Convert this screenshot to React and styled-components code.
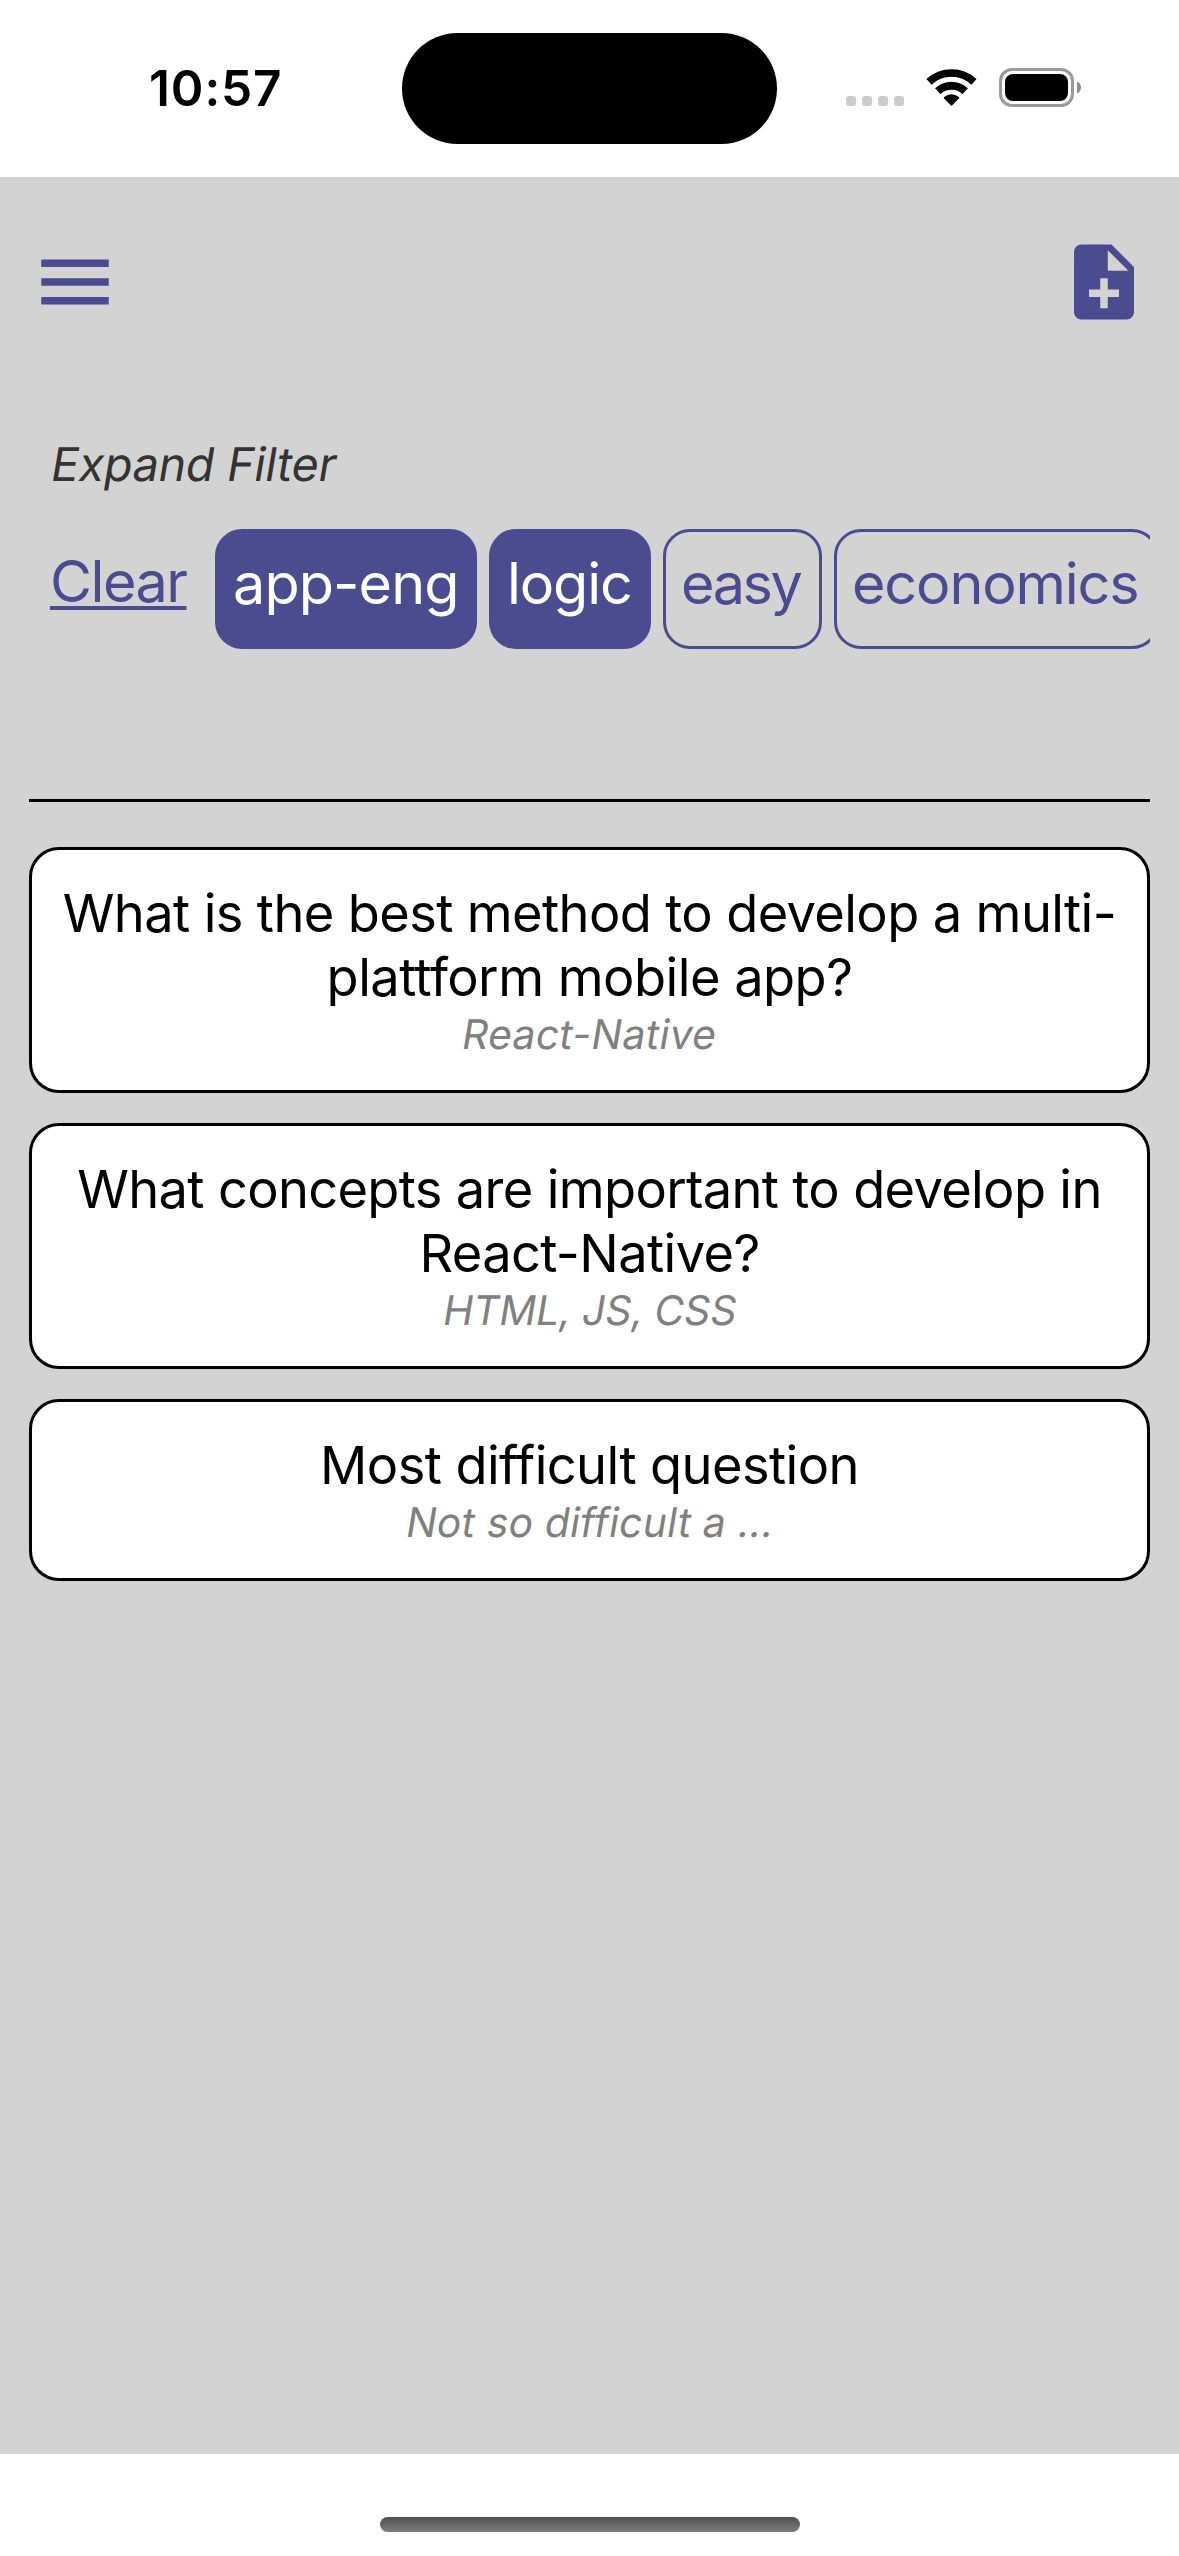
import React from "react";
import styled, { createGlobalStyle } from "styled-components";

const ACCENT = "#4b4b8f";

const GlobalStyle = createGlobalStyle`
  *, *::before, *::after { box-sizing: border-box; }
  body { margin: 0; background: #fff; }
`;

const Screen = styled.div`
  display: flex;
  flex-direction: column;
  width: 1179px;
  height: 2556px;
  overflow: hidden;
  background: #fff;
  font-family: Inter, "Liberation Sans", sans-serif;
  color: #000;
`;

const StatusBar = styled.header`
  display: grid;
  grid-template-columns: 402px 375px 1fr;
  height: 177px;
  flex: none;
`;

const Time = styled.div`
  padding: 58px 0 0 149px;
  font-size: 49.5px;
  font-weight: 600;
  line-height: 60px;
  letter-spacing: 0.9px;
`;

const Island = styled.div`
  height: 111px;
  margin-top: 33px;
  border-radius: 56px;
  background: #000;
`;

const StatusIcons = styled.div`
  display: flex;
  align-items: flex-end;
  gap: 22px;
  padding: 0 0 70px 69px;
`;

const SignalDots = styled.div`
  display: flex;
  gap: 6px;
  margin-bottom: 1px;
`;

const Dot = styled.span`
  width: 10px;
  height: 10px;
  border-radius: 3px;
  background: #ccc;
`;

const WifiIcon = styled.svg`
  display: block;
  width: 51px;
  height: 38px;
`;

const BatteryIcon = styled.svg`
  display: block;
  width: 83px;
  height: 39px;
`;

const Page = styled.main`
  flex: 1;
  background: #d3d3d3;
`;

const AppBar = styled.nav`
  display: flex;
  justify-content: space-between;
  padding: 60px 30px 0;
`;

const IconButton = styled.button`
  display: block;
  width: 90px;
  height: 90px;
  padding: 0;
  border: 0;
  background: none;
  color: ${ACCENT};

  svg {
    display: block;
    width: 100%;
    height: 100%;
    fill: currentColor;
  }
`;

const Filter = styled.section`
  display: flex;
  flex-direction: column;
  margin: 0 29px;
  padding: 109px 0 150px;
  border-bottom: 3px solid #000;
`;

const Oblique = styled.span`
  display: inline-block;
  transform: skewX(-9.5deg);
  transform-origin: 0 80%;
  letter-spacing: ${(p) => p.$tracking || 0}px;
`;

const FilterToggle = styled.div`
  padding-left: 20px;
  margin-bottom: 37px;
  font-size: 46.5px;
  line-height: 56px;
  color: #333;
`;

const TagRow = styled.div`
  display: flex;
  gap: 12px;
  height: 120px;
  padding-left: 21px;
  overflow: hidden;
`;

const ClearLink = styled.a`
  flex: none;
  width: 135px;
  margin: 16px 18px 0 0;
  font-size: 57.5px;
  line-height: 72px;
  letter-spacing: -1.5px;
  color: ${ACCENT};
  text-decoration: underline;
  text-decoration-thickness: 4px;
  text-underline-offset: 4px;
  text-decoration-skip-ink: none;
`;

const Tag = styled.button`
  flex: none;
  width: ${(p) => p.$width}px;
  height: 120px;
  padding: 0 0 12px 15px;
  border: 3px solid ${ACCENT};
  border-radius: 27px;
  background: ${(p) => (p.$active ? ACCENT : "transparent")};
  color: ${(p) => (p.$active ? "#fff" : ACCENT)};
  font-family: inherit;
  font-size: 57.5px;
  line-height: 72px;
  letter-spacing: ${(p) => p.$tracking}px;
  text-align: left;
  white-space: nowrap;
`;

const CardList = styled.section`
  display: flex;
  flex-direction: column;
  gap: 30px;
  padding: 45px 29px 0;
`;

const Card = styled.article`
  padding: 31px 20px 30px;
  border: 3px solid #000;
  border-radius: 30px;
  background: #fff;
  text-align: center;
`;

const Question = styled.h2`
  margin: 0;
  font-size: 52.4px;
  font-weight: 400;
  line-height: 64px;
`;

const Line = styled.span`
  display: block;
  white-space: nowrap;
  letter-spacing: ${(p) => p.$tracking}px;
`;

const Answer = styled.p`
  margin: 0;
  padding-right: 4px;
  font-size: 40.8px;
  line-height: 51px;
  color: #808080;
`;

const HomeArea = styled.footer`
  display: flex;
  justify-content: center;
  height: 102px;
  padding-top: 63px;
  flex: none;
`;

const HomeIndicator = styled.div`
  width: 420px;
  height: 15px;
  border-radius: 8px;
  background: linear-gradient(#505050, #7e7e7e);
`;

const tags = [
  { label: "app-eng", width: 262, tracking: -0.9, active: true },
  { label: "logic", width: 162, tracking: -1.15, active: true },
  { label: "easy", width: 159, tracking: -2.4 },
  { label: "economics", width: 325, tracking: -1.15 },
];

const cards = [
  {
    question: [
      { text: "What is the best method to develop a multi-", tracking: -0.62 },
      { text: "plattform mobile app?", tracking: -0.52 },
    ],
    answer: "React-Native",
    tracking: 0.35,
  },
  {
    question: [
      { text: "What concepts are important to develop in", tracking: -0.66 },
      { text: "React-Native?", tracking: -0.6 },
    ],
    answer: "HTML, JS, CSS",
    tracking: -0.1,
  },
  {
    question: [{ text: "Most difficult question", tracking: -0.58 }],
    answer: "Not so difficult a ...",
    tracking: 0.2,
  },
];

export default function App() {
  return (
    <Screen>
      <GlobalStyle />
      <StatusBar>
        <Time>10:57</Time>
        <Island />
        <StatusIcons>
          <SignalDots>
            <Dot />
            <Dot />
            <Dot />
            <Dot />
          </SignalDots>
          <WifiIcon viewBox="0 0 51 38" fill="none" stroke="#000">
            <path d="M3 12.9A33 33 0 0 1 48 12.9" strokeWidth="7.6" />
            <path d="M11.7 22.2A20.2 20.2 0 0 1 39.3 22.2" strokeWidth="7.8" />
            <path
              d="M25.5 37L17.9 29.2Q17.6 28.6 18.2 28Q21.5 25.3 25.5 25.3Q29.5 25.3 32.8 28Q33.4 28.6 33.1 29.2Z"
              fill="#000"
              stroke="none"
            />
          </WifiIcon>
          <BatteryIcon viewBox="0 0 83 39">
            <rect x="1.5" y="1.5" width="72" height="36" rx="11.5" fill="none" stroke="#999" strokeWidth="3" />
            <rect x="6" y="6" width="63" height="27" rx="8" />
            <path d="M78 13.5Q82 15.5 82 19.5Q82 23.5 78 25.5Z" fill="#8c8c8c" />
          </BatteryIcon>
        </StatusIcons>
      </StatusBar>

      <Page>
        <AppBar>
          <IconButton aria-label="Menu">
            <svg viewBox="0 0 24 24">
              <path d="M3 18h18v-2H3v2zm0-5h18v-2H3v2zm0-7v2h18V6H3z" />
            </svg>
          </IconButton>
          <IconButton aria-label="New question">
            <svg viewBox="0 0 24 24">
              <path d="M14 2H6c-1.1 0-1.99.9-1.99 2L4 20c0 1.1.89 2 1.99 2H18c1.1 0 2-.9 2-2V8l-6-6zm2 14h-3v3h-2v-3H8v-2h3v-3h2v3h3v2zm-3-7V3.5L18.5 9H13z" />
            </svg>
          </IconButton>
        </AppBar>

        <Filter>
          <FilterToggle>
            <Oblique $tracking={-0.2}>Expand Filter</Oblique>
          </FilterToggle>
          <TagRow>
            <ClearLink>Clear</ClearLink>
            {tags.map((t) => (
              <Tag key={t.label} $width={t.width} $tracking={t.tracking} $active={t.active}>
                {t.label}
              </Tag>
            ))}
          </TagRow>
        </Filter>

        <CardList>
          {cards.map((c) => (
            <Card key={c.answer}>
              <Question>
                {c.question.map((line) => (
                  <Line key={line.text} $tracking={line.tracking}>
                    {line.text}
                  </Line>
                ))}
              </Question>
              <Answer>
                <Oblique $tracking={c.tracking}>{c.answer}</Oblique>
              </Answer>
            </Card>
          ))}
        </CardList>
      </Page>

      <HomeArea>
        <HomeIndicator />
      </HomeArea>
    </Screen>
  );
}
